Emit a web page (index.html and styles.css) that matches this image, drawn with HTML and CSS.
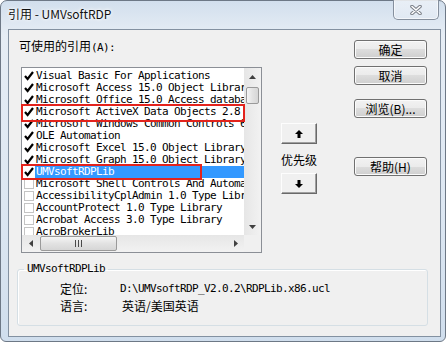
FILE: index.html
```html
<!DOCTYPE html>
<html lang="zh-CN">
<head>
  <meta charset="UTF-8">
  <meta name="viewport" content="width=device-width, initial-scale=1.0">
  <title>引用 - UMVsoftRDP</title>
  <link rel="stylesheet" href="styles.css">
</head>
<body>

  <div class="window">
    <div class="titlebar">
      <span class="title">引用 - UMVsoftRDP</span>
      <button class="close-btn" aria-label="关闭">
        <svg width="12" height="10" viewBox="0 0 12 10">
          <path d="M2 1.5 L10 8.5 M10 1.5 L2 8.5" stroke="#7a7f88" stroke-width="3.6" stroke-linecap="round"/>
          <path d="M2 1.5 L10 8.5 M10 1.5 L2 8.5" stroke="#fff" stroke-width="1.6" stroke-linecap="round"/>
        </svg>
      </button>
    </div>

    <div class="client">
      <div class="top-row">
        <div class="refs">
          <div class="refs-label">可使用的引用<span class="mono">(A):</span></div>
          <div class="listbox">
            <div class="rows">
              <div class="row"><span class="check on"><svg width="10" height="10" viewBox="0 0 10 10"><polyline points="1,5 3.6,8 9,1" fill="none" stroke="#000" stroke-width="2.2"/></svg></span><span class="name mono">Visual Basic For Applications</span></div>
              <div class="row"><span class="check on"><svg width="10" height="10" viewBox="0 0 10 10"><polyline points="1,5 3.6,8 9,1" fill="none" stroke="#000" stroke-width="2.2"/></svg></span><span class="name mono">Microsoft Access 15.0 Object Library</span></div>
              <div class="row"><span class="check on"><svg width="10" height="10" viewBox="0 0 10 10"><polyline points="1,5 3.6,8 9,1" fill="none" stroke="#000" stroke-width="2.2"/></svg></span><span class="name mono">Microsoft Office 15.0 Access database engine Object Library</span></div>
              <div class="row"><span class="check on"><svg width="10" height="10" viewBox="0 0 10 10"><polyline points="1,5 3.6,8 9,1" fill="none" stroke="#000" stroke-width="2.2"/></svg></span><span class="name mono">Microsoft ActiveX Data Objects 2.8 Library</span></div>
              <div class="row"><span class="check on"><svg width="10" height="10" viewBox="0 0 10 10"><polyline points="1,5 3.6,8 9,1" fill="none" stroke="#000" stroke-width="2.2"/></svg></span><span class="name mono">Microsoft Windows Common Controls 6.0 (SP6)</span></div>
              <div class="row"><span class="check on"><svg width="10" height="10" viewBox="0 0 10 10"><polyline points="1,5 3.6,8 9,1" fill="none" stroke="#000" stroke-width="2.2"/></svg></span><span class="name mono">OLE Automation</span></div>
              <div class="row"><span class="check on"><svg width="10" height="10" viewBox="0 0 10 10"><polyline points="1,5 3.6,8 9,1" fill="none" stroke="#000" stroke-width="2.2"/></svg></span><span class="name mono">Microsoft Excel 15.0 Object Library</span></div>
              <div class="row"><span class="check on"><svg width="10" height="10" viewBox="0 0 10 10"><polyline points="1,5 3.6,8 9,1" fill="none" stroke="#000" stroke-width="2.2"/></svg></span><span class="name mono">Microsoft Graph 15.0 Object Library</span></div>
              <div class="row"><span class="check on"><svg width="10" height="10" viewBox="0 0 10 10"><polyline points="1,5 3.6,8 9,1" fill="none" stroke="#000" stroke-width="2.2"/></svg></span><span class="name mono selected">UMVsoftRDPLib</span></div>
              <div class="row"><span class="check"></span><span class="name mono">Microsoft Shell Controls And Automation</span></div>
              <div class="row"><span class="check"></span><span class="name mono">AccessibilityCplAdmin 1.0 Type Library</span></div>
              <div class="row"><span class="check"></span><span class="name mono">AccountProtect 1.0 Type Library</span></div>
              <div class="row"><span class="check"></span><span class="name mono">Acrobat Access 3.0 Type Library</span></div>
              <div class="row"><span class="check"></span><span class="name mono">AcroBrokerLib</span></div>
            </div>

            <div class="vscroll">
              <div class="sb-btn">
                <svg width="7" height="4" viewBox="0 0 7 4"><polygon points="3.5,0 7,4 0,4" fill="#404040"/></svg>
              </div>
              <div class="vthumb"></div>
              <div class="sb-fill"></div>
              <div class="sb-btn">
                <svg width="7" height="4" viewBox="0 0 7 4"><polygon points="0,0 7,0 3.5,4" fill="#404040"/></svg>
              </div>
            </div>

            <div class="hscroll">
              <div class="sb-btn">
                <svg width="4" height="7" viewBox="0 0 4 7"><polygon points="4,0 4,7 0,3.5" fill="#404040"/></svg>
              </div>
              <div class="hthumb">
                <svg width="7" height="7" viewBox="0 0 7 7">
                  <rect x="0" y="0" width="1" height="7" fill="#4a4a4a"/>
                  <rect x="3" y="0" width="1" height="7" fill="#4a4a4a"/>
                  <rect x="6" y="0" width="1" height="7" fill="#4a4a4a"/>
                </svg>
              </div>
              <div class="sb-fill"></div>
              <div class="sb-btn">
                <svg width="4" height="7" viewBox="0 0 4 7"><polygon points="0,0 4,3.5 0,7" fill="#404040"/></svg>
              </div>
            </div>

            <div class="corner"></div>

            <!-- red annotation boxes -->
            <div class="mark mark-ado"></div>
            <div class="mark mark-umv"></div>
          </div>
        </div>

        <div class="priority">
          <button class="arrow-btn" aria-label="上移">
            <svg width="8" height="8" viewBox="0 0 8 8"><polygon points="4,0 8,4 5.5,4 5.5,8 2.5,8 2.5,4 0,4" fill="#000"/></svg>
          </button>
          <div class="priority-label">优先级</div>
          <button class="arrow-btn" aria-label="下移">
            <svg width="8" height="8" viewBox="0 0 8 8"><polygon points="2.5,0 5.5,0 5.5,4 8,4 4,8 0,4 2.5,4" fill="#000"/></svg>
          </button>
        </div>

        <div class="actions">
          <button class="btn">确定</button>
          <button class="btn btn-cancel">取消</button>
          <button class="btn btn-browse">浏览(B)...</button>
          <button class="btn btn-help">帮助(H)</button>
        </div>
      </div>

      <fieldset class="details">
        <legend class="mono">UMVsoftRDPLib</legend>
        <div class="detail-row"><span class="key">定位:</span><span class="mono">D:\UMVsoftRDP_V2.0.2\RDPLib.x86.ucl</span></div>
        <div class="detail-row"><span class="key">语言:</span><span class="lang">英语/美国英语</span></div>
      </fieldset>
    </div>
  </div>

</body>
</html>
```

FILE: styles.css
```css
body {
  margin: 0;
  background-color: #fff;
  font-family: "Noto Sans CJK SC", sans-serif;
  font-size: 12px;
  color: #000;
}

.mono {
  font-family: "DejaVu Sans Mono", "Noto Sans CJK SC", monospace;
  font-size: 11px;
  letter-spacing: -0.62px;
}

/* window frame */
.window {
  width: 446px;
  height: 342px;
  box-sizing: border-box;
  padding: 0 4px 4px 7px;
  border: 1px solid #6d7886;
  border-radius: 7px 7px 6px 6px;
  background: linear-gradient(180deg, #d2dfed 0%, #e6edf5 10%, #dde7f2 60%, #d0deed 100%);
  display: flex;
  flex-direction: column;
}

.titlebar {
  height: 28px;
  flex-shrink: 0;
  display: flex;
  align-items: flex-start;
}

.title {
  margin-top: 5px;
  line-height: 16px;
  color: #111;
  text-shadow: 0 0 5px #fff, 0 0 3px #fff;
}

.close-btn {
  margin: -1px 2px 0 auto;
  width: 46px;
  height: 20px;
  padding: 0;
  border: 1px solid #858f9d;
  border-top: none;
  border-radius: 0 0 5px 5px;
  background: linear-gradient(180deg, rgba(255, 255, 255, 0.5), rgba(225, 233, 243, 0.75));
  box-shadow: inset 0 0 0 1px rgba(255, 255, 255, 0.6);
  display: flex;
  justify-content: center;
  align-items: center;
}

/* client area */
.client {
  flex: 1;
  border: 1px solid #8391a1;
  background-color: #f0f0f0;
  padding-top: 8px;
}

.top-row {
  display: flex;
  align-items: flex-start;
}

.refs {
  margin-left: 12px;
  width: 241px;
}

.refs-label {
  margin-left: -2px;
  line-height: 16px;
}

.listbox {
  position: relative;
  margin-top: 11px;
  width: 241px;
  height: 186px;
  box-sizing: border-box;
  border: 1px solid #8b8f96;
  background-color: #fff;
  display: grid;
  grid-template-columns: 1fr 17px;
  grid-template-rows: 1fr 17px;
}

.rows {
  overflow: hidden;
  padding-top: 2px;
}

.row {
  height: 12px;
  display: flex;
  align-items: center;
}

.check {
  margin-left: 2px;
  width: 10px;
  height: 10px;
  box-sizing: border-box;
  border: 1px solid #c4c4c4;
  flex-shrink: 0;
}

.check.on {
  border: none;
}

.check svg {
  display: block;
}

.name {
  flex: 1;
  margin-left: 1px;
  padding-left: 1px;
  line-height: 12px;
  white-space: nowrap;
}

.name.selected {
  background-color: #3399ff;
  color: #fff;
}

/* scrollbars */
.vscroll {
  display: flex;
  flex-direction: column;
  background: linear-gradient(90deg, #e6e6e6, #f2f2f2);
}

.hscroll {
  display: flex;
  background: linear-gradient(180deg, #e6e6e6, #f2f2f2);
}

.sb-btn {
  width: 17px;
  height: 17px;
  flex-shrink: 0;
  display: flex;
  justify-content: center;
  align-items: center;
}

.sb-fill {
  flex: 1;
}

.vthumb {
  margin: 2px 0 0 2px;
  width: 13px;
  height: 17px;
  box-sizing: border-box;
  border: 1px solid #9a9a9a;
  border-radius: 2px;
  background: linear-gradient(90deg, #f5f5f5, #e2e2e2 50%, #d6d6d6);
}

.hthumb {
  margin: 1px 0 0 1px;
  width: 77px;
  height: 15px;
  box-sizing: border-box;
  border: 1px solid #9a9a9a;
  border-radius: 2px;
  background: linear-gradient(180deg, #f5f5f5, #e2e2e2 50%, #d6d6d6);
  display: flex;
  justify-content: center;
  align-items: center;
}

.corner {
  background-color: #f0f0f0;
}

.mark {
  position: absolute;
  left: -1px;
  box-sizing: border-box;
  border: 2px solid #e3231c;
}

.mark-ado {
  top: 36px;
  width: 224px;
  height: 18px;
}

.mark-umv {
  top: 96px;
  width: 181px;
  height: 16px;
}

/* priority arrows */
.priority {
  margin-left: 19px;
  padding-top: 85px;
  width: 36px;
  display: flex;
  flex-direction: column;
}

.arrow-btn {
  width: 36px;
  height: 21px;
  padding: 0;
  box-sizing: border-box;
  border: 1px solid;
  border-color: #fdfdfd #696969 #696969 #fdfdfd;
  box-shadow: inset -1px -1px 0 #a0a0a0;
  background-color: #f0f0f0;
  display: flex;
  justify-content: center;
  align-items: center;
}

.priority-label {
  margin: 8px -4px 5px;
  line-height: 16px;
  text-align: center;
}

/* command buttons */
.actions {
  margin-left: 37px;
  padding-top: 2px;
  display: flex;
  flex-direction: column;
}

.btn {
  width: 73px;
  height: 19px;
  padding: 0;
  box-sizing: border-box;
  border: 1px solid #707070;
  border-radius: 3px;
  background: linear-gradient(180deg, #f2f2f2 0%, #ebebeb 50%, #dddddd 50%, #cfcfcf 100%);
  box-shadow: inset 0 0 0 1px #fbfbfb;
  font-family: "Noto Sans CJK SC", sans-serif;
  font-size: 12px;
  line-height: 16px;
  color: #000;
  white-space: nowrap;
}

.btn-cancel {
  margin-top: 7px;
}

.btn-browse {
  margin-top: 14px;
}

.btn-help {
  margin-top: 39px;
}

/* details group */
.details {
  margin: 10px 0 0 8px;
  width: 411px;
  min-width: 0;
  box-sizing: border-box;
  padding: 5px 0 11px 0;
  border: 1px solid #d5dfe5;
  border-radius: 3px;
  box-shadow: inset 1px 1px 0 #fff;
}

.details legend {
  margin-left: 6px;
  padding: 0 3px;
  line-height: 12px;
}

.detail-row {
  padding-left: 42px;
  height: 17px;
  line-height: 17px;
  display: flex;
  white-space: nowrap;
}

.key {
  width: 60px;
  flex-shrink: 0;
}

.lang {
  margin-left: 2px;
}
```
